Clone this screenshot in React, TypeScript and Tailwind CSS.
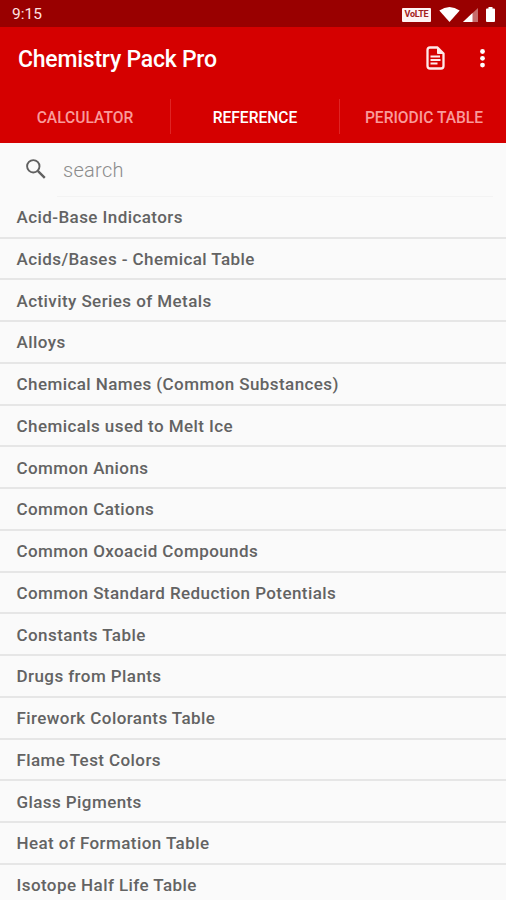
const topics = [
  'Acid-Base Indicators',
  'Acids/Bases - Chemical Table',
  'Activity Series of Metals',
  'Alloys',
  'Chemical Names (Common Substances)',
  'Chemicals used to Melt Ice',
  'Common Anions',
  'Common Cations',
  'Common Oxoacid Compounds',
  'Common Standard Reduction Potentials',
  'Constants Table',
  'Drugs from Plants',
  'Firework Colorants Table',
  'Flame Test Colors',
  'Glass Pigments',
  'Heat of Formation Table',
  'Isotope Half Life Table',
];

function StatusBar() {
  return (
    <div className="flex h-[27px] shrink-0 items-center justify-between bg-[#990000] pl-3 pr-[11px] text-white">
      <span className="pt-[2px] text-[15.5px] leading-none text-[#ffe3e3]">9:15</span>
      <div className="flex items-center pt-[2px]">
        <span className="flex h-[14px] w-[29px] items-center justify-center rounded-[1px] bg-[#fff3f3] text-[9px] font-bold leading-none tracking-[-0.3px] text-[#a22020]">
          VoLTE
        </span>
        <svg className="ml-2 h-[15px] w-[21px]" viewBox="0 0 21 15" fill="white">
          <path d="M0.3 3.6Q10.5-3.4 20.7 3.6L10.5 15Z" />
        </svg>
        <svg className="ml-[3px] h-[14px] w-[15px]" viewBox="0 0 15 14">
          <path d="M0 14L15 0V14Z" fill="#c66b6b" />
          <path d="M0 14L9.5 5.1V14Z" fill="white" />
        </svg>
        <svg className="ml-2 h-[15px] w-[9px]" viewBox="0 0 9 15" fill="white">
          <path d="M2.5 0h4v1.6H8q1 0 1 1V14q0 1-1 1H1q-1 0-1-1V2.6q0-1 1-1h1.5z" />
        </svg>
      </div>
    </div>
  );
}

function AppBar() {
  return (
    <header className="flex h-[65px] shrink-0 items-center pb-[3px] pl-[18px] pr-[20px] text-white">
      <h1 className="flex-1 pt-[3px] text-[23px] font-medium leading-none tracking-[-0.24px]">Chemistry Pack Pro</h1>
      <svg className="h-[24px] w-[19px]" viewBox="0 0 19 24" fill="none" stroke="#ffeaea" strokeLinejoin="round">
        <path d="M4 1.500H11.500L17.500 7.500V20Q17.500 22.500 15 22.500H4Q1.500 22.500 1.500 20V4Q1.500 1.500 4 1.500Z" strokeWidth="2.300" />
        <path d="M11.500 1.500V7.500H17.500Z" fill="#ffeaea" />
        <path d="M4.500 10.500H14M4.500 14H14.500M4.500 17.500H11.500" strokeWidth="1.800" />
      </svg>
      <svg className="ml-[34px] h-[20px] w-[7px]" viewBox="0 0 7 20" fill="white">
        <circle cx="3.500" cy="3.500" r="2.400" />
        <circle cx="3.500" cy="10.300" r="2.400" />
        <circle cx="3.500" cy="17.100" r="2.400" />
      </svg>
    </header>
  );
}

function Tabs() {
  return (
    <nav className="flex h-[51px] shrink-0 pb-[9px] pt-[7px] text-[15.6px] font-medium leading-[39px] text-[#f99a9a]">
      <span className="w-[170px] text-center">CALCULATOR</span>
      <span className="w-[170px] border-x border-[#e02424] text-center text-white">REFERENCE</span>
      <span className="flex-1 whitespace-nowrap pl-[2px] text-center">PERIODIC TABLE</span>
    </nav>
  );
}

export default function App() {
  return (
    <div className="flex h-[900px] w-full flex-col overflow-hidden bg-[#fafafa] font-['Roboto',sans-serif]">
      <StatusBar />
      <div className="shrink-0 bg-[#d50000]">
        <AppBar />
        <Tabs />
      </div>
      <div className="flex h-[53.750px] shrink-0 items-center pl-[26px] pr-[13px]">
        <svg className="mb-[2px] h-5 w-5" viewBox="0 0 20 20" fill="none" stroke="#606060">
          <circle cx="7.300" cy="7.300" r="6.200" strokeWidth="1.900" />
          <path d="M11.800 11.800L18.800 18.800" strokeWidth="2.400" />
        </svg>
        <div className="ml-[11px] flex h-full flex-1 items-center border-b border-[#f3f3f3] pl-1.5 pt-[1px] text-[20px] font-light tracking-[0.3px] text-[#8c8c8c]">
          search
        </div>
      </div>
      <ul className="shrink-0">
        {topics.map((topic) => (
          <li
            key={topic}
            className="flex h-[41.750px] items-center border-b-2 border-[#e6e6e6] pl-[16.500px] pt-[2px] text-[17px] font-medium leading-none tracking-[0.420px] text-[#636363]"
          >
            {topic}
          </li>
        ))}
      </ul>
    </div>
  );
}
